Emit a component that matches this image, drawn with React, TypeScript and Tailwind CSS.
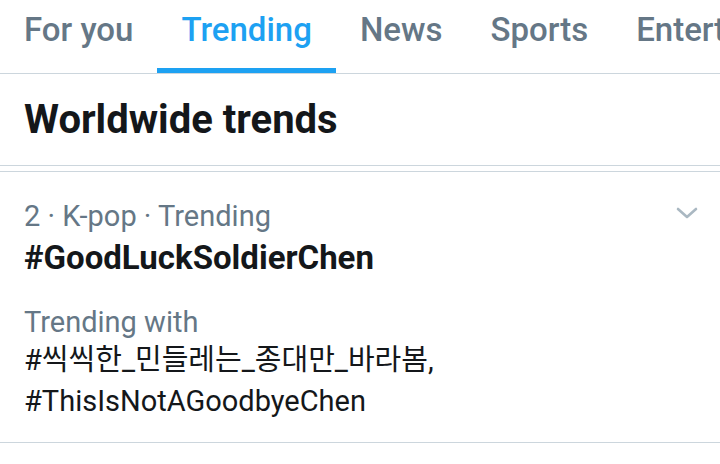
import React from "react";

const tabs = ["For you", "Trending", "News", "Sports", "Entertainment"];

export default function App() {
  return (
    <div
      className="w-[720px] h-[464px] bg-white overflow-hidden"
      style={{ fontFamily: "Roboto, 'Noto Sans CJK KR', sans-serif" }}
    >
      <div className="flex h-[74px] border-b border-[#ccd6dd] whitespace-nowrap">
        {tabs.map((t, i) => (
          <div key={t} className="flex flex-col items-center justify-between shrink-0 px-[24px]">
            <div
              className={`pt-[10px] text-[33px] font-medium leading-[40px] ${
                i === 1 ? "text-[#1da1f2]" : "text-[#657786]"
              }`}
            >
              {t}
            </div>
            <div
              className={`h-[5px] w-[calc(100%+48px)] ${i === 1 ? "bg-[#1da1f2]" : "bg-transparent"}`}
            />
          </div>
        ))}
      </div>
      <div className="h-[92px] flex items-center px-[24px] border-b border-[#ccd6dd]">
        <div className="text-[40px] font-bold text-[#14171a] leading-[48px]">Worldwide trends</div>
      </div>
      <div className="h-[5px]" />
      <div className="border-t border-[#ccd6dd] border-b px-[24px] pt-[26px] pb-[20px] relative">
        <div className="text-[29px] text-[#657786] leading-[36px]">2 · K-pop · Trending</div>
        <div className="text-[33px] font-bold text-[#14171a] leading-[48px]">
          #GoodLuckSoldierChen
        </div>
        <div className="mt-[22px] text-[29px] text-[#657786] leading-[36px]">Trending with</div>
        <div className="text-[29px] text-[#14171a] leading-[40px]">#씩씩한_민들레는_종대만_바라봄,</div>
        <div className="text-[29px] text-[#14171a] leading-[42px]">#ThisIsNotAGoodbyeChen</div>
        <svg
          className="absolute right-[22px] top-[34px]"
          width="22"
          height="14"
          viewBox="0 0 22 14"
        >
          <path
            d="M2 3 L11 11 L20 3"
            stroke="#aab8c2"
            strokeWidth="2.6"
            fill="none"
            strokeLinecap="round"
            strokeLinejoin="round"
          />
        </svg>
      </div>
    </div>
  );
}
